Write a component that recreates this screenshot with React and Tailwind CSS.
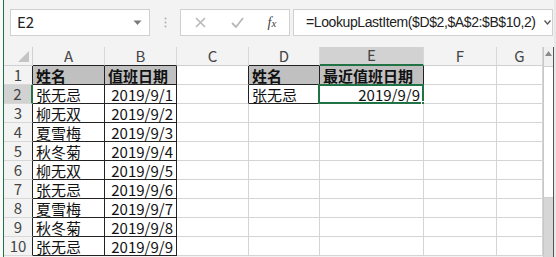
import React from "react";

const cols = ["A", "B", "C", "D", "E", "F", "G"];

const data = [
	["姓名", "值班日期", "", "姓名", "最近值班日期"],
	["张无忌", "2019/9/1", "", "张无忌", "2019/9/9"],
	["柳无双", "2019/9/2"],
	["夏雪梅", "2019/9/3"],
	["秋冬菊", "2019/9/4"],
	["柳无双", "2019/9/5"],
	["张无忌", "2019/9/6"],
	["夏雪梅", "2019/9/7"],
	["秋冬菊", "2019/9/8"],
	["张无忌", "2019/9/9"],
];

const font = { fontFamily: '"Noto Sans CJK SC", "Noto Sans", sans-serif' };

// which cells carry the black table borders
const inTable = (r, c) => c <= 1 || (r <= 1 && (c === 3 || c === 4));

const Cell = ({ r, c }) => {
	const value = (data[r] && data[r][c]) || "";
	const header = r === 0 && inTable(r, c) && value;
	const isDate = /^\d/.test(value);
	const boxed = inTable(r, c);
	// right border black when this cell or the next one is in a table
	const rightDark = boxed || inTable(r, c + 1);
	const bottomDark = boxed || inTable(r + 1, c);
	const selected = r === 1 && c === 4;

	return (
		<div
			className={
				"relative h-[19px] flex items-center px-[3px] text-[15px] leading-none text-[#111] border-r border-b " +
				(rightDark ? "border-r-[#222] " : "border-r-[#d4d4d4] ") +
				(bottomDark ? "border-b-[#222] " : "border-b-[#d4d4d4] ") +
				(header ? "bg-[#c0c0c0] font-semibold " : "bg-white ") +
				(isDate ? "justify-end" : "justify-start")
			}
		>
			<span className="whitespace-nowrap">{value}</span>
			{selected && (
				<>
					<div className="absolute -left-[2px] -top-[1px] -right-[1px] -bottom-[1px] border-2 border-[#217346]"></div>
					<div className="absolute -right-[3px] -bottom-[3px] w-[5px] h-[5px] bg-[#217346] border border-white"></div>
				</>
			)}
		</div>
	);
};

const App = () => {
	return (
		<div
			className="w-[556px] h-[257px] overflow-hidden bg-white flex"
			style={font}
		>
			<div className="w-[3px] bg-[#fafafa]"></div>
			<div className="w-[1px] bg-[#217346]"></div>
			<div className="flex-1 flex flex-col bg-[#f3f3f3]">
				{/* formula bar */}
				<div className="h-[47px] flex items-start pt-[9px] pl-[6px]">
					<div className="w-[140px] h-[27px] bg-white border border-[#d0d0d0] flex items-center pl-[6px] pr-[7px] justify-between">
						<span className="text-[15px] text-[#222]">E2</span>
						<svg width="9" height="6" viewBox="0 0 9 6">
							<path d="M0.5 0.5h8L4.5 5z" fill="#7a7a7a" />
						</svg>
					</div>
					<div className="w-[30px] h-[27px] flex items-center justify-center">
						<svg width="3" height="11" viewBox="0 0 3 11">
							<circle cx="1.5" cy="1.5" r="1" fill="#b0b0b0" />
							<circle cx="1.5" cy="5.5" r="1" fill="#b0b0b0" />
							<circle cx="1.5" cy="9.5" r="1" fill="#b0b0b0" />
						</svg>
					</div>
					<div className="w-[110px] h-[27px] bg-white border border-[#d0d0d0] flex items-center">
						<div className="w-[38px] flex justify-center">
							<svg width="11" height="11" viewBox="0 0 11 11">
								<path d="M1 1l9 9M10 1l-9 9" stroke="#b8b8b8" strokeWidth="1.6" />
							</svg>
						</div>
						<div className="w-[36px] flex justify-center">
							<svg width="13" height="11" viewBox="0 0 13 11">
								<path d="M1 6l4 4 7-9" stroke="#b8b8b8" strokeWidth="1.8" fill="none" />
							</svg>
						</div>
						<div className="w-[34px] flex justify-center">
							<span
								className="text-[14px] italic text-[#444]"
								style={{ fontFamily: '"Liberation Serif", serif' }}
							>
								f<span className="text-[11px]">x</span>
							</span>
						</div>
					</div>
					<div className="ml-[3px] w-[260px] h-[27px] bg-white border border-[#d0d0d0] flex items-center pl-[12px] pr-[1px] justify-between">
						<span
							className="text-[14px] tracking-[-0.4px] text-[#222] whitespace-nowrap"
							style={{ fontFamily: '"Liberation Sans", Arial, sans-serif' }}
						>
							=LookupLastItem($D$2,$A$2:$B$10,2)
						</span>
						<svg width="7" height="5" viewBox="0 0 7 5">
							<path d="M0.5 0.5L3.5 4L6.5 0.5" stroke="#555" strokeWidth="1.3" fill="none" />
						</svg>
					</div>
				</div>

				{/* sheet */}
				<div className="flex-1 flex">
					<div className="grid grid-cols-[29px_72px_72px_72px_71px_104px_73px_46px] content-start">
						{/* column header row */}
						<div className="h-[19px] bg-[#f3f3f3] border-r border-b border-[#d0d0d0] flex items-end justify-end p-[3px]">
							<svg width="11" height="11" viewBox="0 0 11 11">
								<path d="M11 0v11H0z" fill="#c4c4c4" />
							</svg>
						</div>
						{cols.map((col, c) => (
							<div
								key={col}
								className={
									"h-[19px] flex items-center justify-center text-[15px] text-[#444] border-r border-r-[#d8d8d8] " +
									(c === 4
										? "bg-[#d2d2d2] border-b-2 border-b-[#217346]"
										: "bg-[#f3f3f3] border-b " +
										  (inTable(0, c) ? "border-b-[#222]" : "border-b-[#d0d0d0]"))
								}
							>
								{col}
							</div>
						))}
						{data.map((row, r) => (
							<React.Fragment key={r}>
								<div
									className={
										"h-[19px] flex items-center justify-center text-[15px] text-[#444] border-b border-b-[#d8d8d8] " +
										(r === 1
											? "bg-[#d2d2d2] border-r-2 border-r-[#217346]"
											: "bg-[#f3f3f3] border-r border-r-[#222]")
									}
								>
									{r + 1}
								</div>
								{cols.map((col, c) => (
									<Cell key={col} r={r} c={c} />
								))}
							</React.Fragment>
						))}
					</div>
					{/* vertical scrollbar */}
					<div className="w-[10px] flex flex-col bg-[#f0f0f0] border-l border-[#c8c8c8]">
						<div className="h-[19px] flex justify-center pt-[4px]">
							<svg width="7" height="5" viewBox="0 0 7 5">
								<path d="M0 5L3.5 0L7 5z" fill="#8a8a8a" />
							</svg>
						</div>
						<div className="h-[132px] bg-white border-y border-[#d0d0d0]"></div>
						<div className="flex-1 bg-[#d6d6d6]"></div>
					</div>
					<div className="w-[1px] bg-[#555]"></div>
				</div>
			</div>
			<div className="w-[2px] bg-[#e8e8e8]"></div>
		</div>
	);
};

export default App;
